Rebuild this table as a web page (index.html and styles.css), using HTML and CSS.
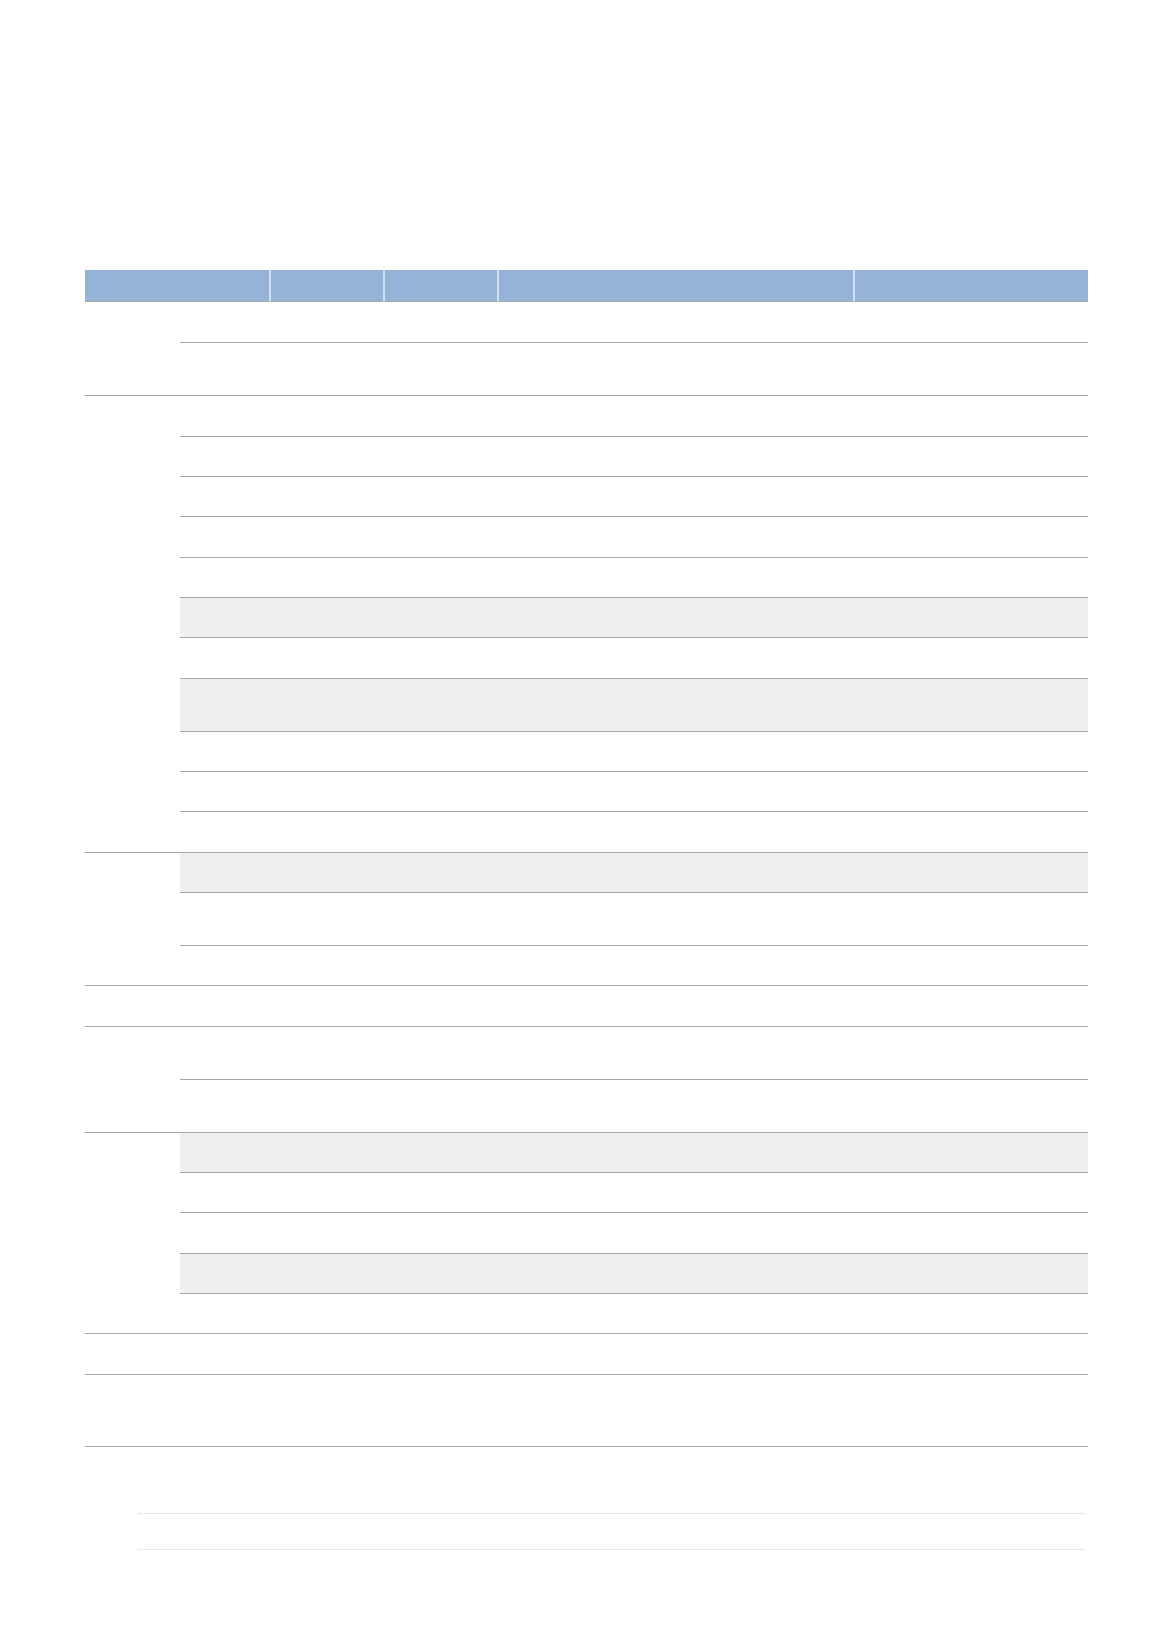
FILE: index.html
```html
<!DOCTYPE html>
<html lang="en">
<head>
<meta charset="utf-8">
<title>Table</title>
<link rel="stylesheet" href="styles.css">
</head>
<body>
<main class="page">
  <div class="sheet">
    <div class="hd hd-first"></div>
    <div class="hd hd-sep"></div>
    <div class="hd hd-sep"></div>
    <div class="hd hd-sep"></div>
    <div class="hd hd-sep"></div>

    <!-- group 1 -->
    <div class="grp span-2"></div>
    <div class="c r1"></div><div class="c r1"></div><div class="c r1"></div><div class="c r1"></div><div class="c r1"></div>
    <div class="c tall"></div><div class="c tall"></div><div class="c tall"></div><div class="c tall"></div><div class="c tall"></div>

    <!-- group 2 -->
    <div class="grp span-11"></div>
    <div class="c"></div><div class="c"></div><div class="c"></div><div class="c"></div><div class="c"></div>
    <div class="c"></div><div class="c"></div><div class="c"></div><div class="c"></div><div class="c"></div>
    <div class="c"></div><div class="c"></div><div class="c"></div><div class="c"></div><div class="c"></div>
    <div class="c"></div><div class="c"></div><div class="c"></div><div class="c"></div><div class="c"></div>
    <div class="c"></div><div class="c"></div><div class="c"></div><div class="c"></div><div class="c"></div>
    <div class="c shade"></div><div class="c shade"></div><div class="c shade"></div><div class="c shade"></div><div class="c shade"></div>
    <div class="c"></div><div class="c"></div><div class="c"></div><div class="c"></div><div class="c"></div>
    <div class="c tall shade"></div><div class="c tall shade"></div><div class="c tall shade"></div><div class="c tall shade"></div><div class="c tall shade"></div>
    <div class="c"></div><div class="c"></div><div class="c"></div><div class="c"></div><div class="c"></div>
    <div class="c"></div><div class="c"></div><div class="c"></div><div class="c"></div><div class="c"></div>
    <div class="c"></div><div class="c"></div><div class="c"></div><div class="c"></div><div class="c"></div>

    <!-- group 3 -->
    <div class="grp span-3"></div>
    <div class="c shade"></div><div class="c shade"></div><div class="c shade"></div><div class="c shade"></div><div class="c shade"></div>
    <div class="c tall"></div><div class="c tall"></div><div class="c tall"></div><div class="c tall"></div><div class="c tall"></div>
    <div class="c"></div><div class="c"></div><div class="c"></div><div class="c"></div><div class="c"></div>

    <!-- group 4 -->
    <div class="grp"></div>
    <div class="c"></div><div class="c"></div><div class="c"></div><div class="c"></div><div class="c"></div>

    <!-- group 5 -->
    <div class="grp span-2"></div>
    <div class="c tall"></div><div class="c tall"></div><div class="c tall"></div><div class="c tall"></div><div class="c tall"></div>
    <div class="c tall"></div><div class="c tall"></div><div class="c tall"></div><div class="c tall"></div><div class="c tall"></div>

    <!-- group 6 -->
    <div class="grp span-5"></div>
    <div class="c shade"></div><div class="c shade"></div><div class="c shade"></div><div class="c shade"></div><div class="c shade"></div>
    <div class="c"></div><div class="c"></div><div class="c"></div><div class="c"></div><div class="c"></div>
    <div class="c"></div><div class="c"></div><div class="c"></div><div class="c"></div><div class="c"></div>
    <div class="c shade"></div><div class="c shade"></div><div class="c shade"></div><div class="c shade"></div><div class="c shade"></div>
    <div class="c"></div><div class="c"></div><div class="c"></div><div class="c"></div><div class="c"></div>

    <!-- group 7 -->
    <div class="grp"></div>
    <div class="c"></div><div class="c"></div><div class="c"></div><div class="c"></div><div class="c"></div>

    <!-- group 8 -->
    <div class="grp"></div>
    <div class="c xtall"></div><div class="c xtall"></div><div class="c xtall"></div><div class="c xtall"></div><div class="c xtall"></div>
  </div>

  <div class="notes">
    <div class="note note-first"></div>
    <div class="note"></div>
  </div>
</main>
</body>
</html>
```

FILE: styles.css
```css
html, body {
  margin: 0;
  padding: 0;
  background: #ffffff;
  font-family: "Liberation Sans", Arial, sans-serif;
}

.page {
  padding: 270px 0 0 85px;
  width: 1003px;
}

.sheet {
  display: grid;
  grid-template-columns: 95px 88.7px 114.6px 114px 356px 234.7px;
  grid-auto-rows: auto;
}

.hd {
  height: 32px;
  box-sizing: border-box;
  background: #95b3d7;
  border-bottom: 1px solid #a6a6a6;
}

.hd-first {
  grid-column: span 2;
}

.hd-sep {
  border-left: 2px solid #d3dfee;
}

.grp {
  grid-column: 1;
  box-sizing: border-box;
  border-bottom: 1px solid #a6a6a6;
}

.span-2 { grid-row: span 2; }
.span-3 { grid-row: span 3; }
.span-5 { grid-row: span 5; }
.span-11 { grid-row: span 11; }

.c {
  height: 40.33px;
  box-sizing: border-box;
  border-bottom: 1px solid #a6a6a6;
}

.c.r1 { height: 41.33px; }
.c.tall { height: 53px; }
.c.xtall { height: 72px; }

.c.shade {
  background: #efefef;
}

.notes {
  margin-left: 52.7px;
  width: 947.3px;
}

.note {
  height: 36px;
  box-sizing: border-box;
  border-bottom: 1px dotted #cfcfcf;
}

.note.note-first {
  height: 67px;
}
```
